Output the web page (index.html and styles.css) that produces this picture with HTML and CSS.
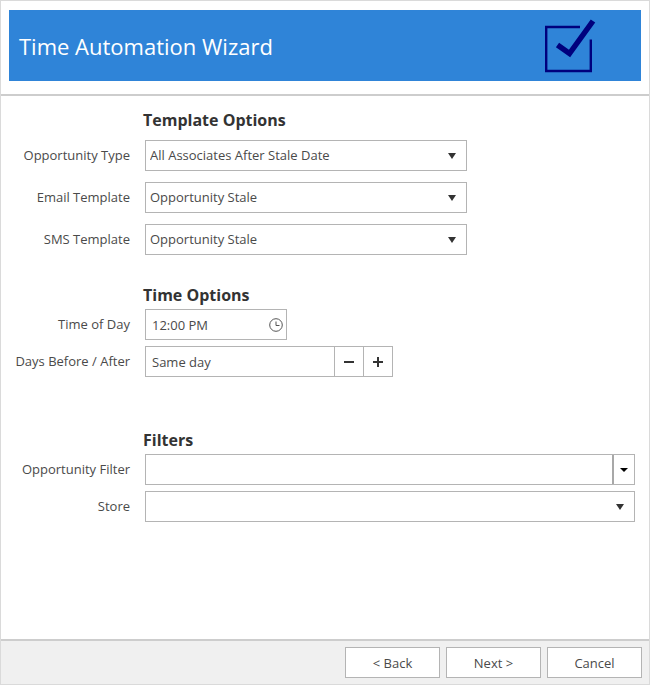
FILE: index.html
```html
<!DOCTYPE html>
<html lang="en">
<head>
<meta charset="utf-8">
<title>Time Automation Wizard</title>
<link rel="stylesheet" href="styles.css">
</head>
<body>
<form class="wizard">
  <header class="wizard-header">
    <div class="banner">
      <h1>Time Automation Wizard</h1>
      <svg class="banner-icon" width="54" height="54" viewBox="0 0 54 54" aria-hidden="true">
        <path d="M36 8H2.200V52H46.800V20.500" fill="none" stroke="#00007d" stroke-width="2.400"/>
        <path d="M13.500 26L25.500 34.500L49 2" fill="none" stroke="#00007d" stroke-width="5.500"/>
      </svg>
    </div>
  </header>

  <main class="wizard-body">
    <section class="group group-template">
      <h2>Template Options</h2>
      <div class="row">
        <label for="type">Opportunity Type</label>
        <div class="select medium">
          <select id="type"><option>All Associates After Stale Date</option></select>
          <svg class="arrow" width="8" height="6" viewBox="0 0 8 6" aria-hidden="true"><path d="M0 0H8L4 6Z"/></svg>
        </div>
      </div>
      <div class="row">
        <label for="email">Email Template</label>
        <div class="select medium">
          <select id="email"><option>Opportunity Stale</option></select>
          <svg class="arrow" width="8" height="6" viewBox="0 0 8 6" aria-hidden="true"><path d="M0 0H8L4 6Z"/></svg>
        </div>
      </div>
      <div class="row">
        <label for="sms">SMS Template</label>
        <div class="select medium">
          <select id="sms"><option>Opportunity Stale</option></select>
          <svg class="arrow" width="8" height="6" viewBox="0 0 8 6" aria-hidden="true"><path d="M0 0H8L4 6Z"/></svg>
        </div>
      </div>
    </section>

    <section class="group group-time">
      <h2>Time Options</h2>
      <div class="row">
        <label for="time">Time of Day</label>
        <div class="field time">
          <input id="time" type="text" value="12:00 PM">
          <button class="clock" type="button" aria-label="Choose time">
            <svg width="14" height="14" viewBox="0 0 14 14" aria-hidden="true">
              <circle cx="7" cy="7" r="6.300"/>
              <path d="M7 3.500V7.500H10.500"/>
            </svg>
          </button>
        </div>
      </div>
      <div class="row">
        <label for="days">Days Before / After</label>
        <div class="field days">
          <input id="days" type="text" value="Same day">
          <button class="step" type="button" aria-label="Decrease">
            <svg width="10" height="10" viewBox="0 0 10 10" aria-hidden="true"><path d="M0 5H10"/></svg>
          </button>
          <button class="step" type="button" aria-label="Increase">
            <svg width="10" height="10" viewBox="0 0 10 10" aria-hidden="true"><path d="M0 5H10M5 0V10"/></svg>
          </button>
        </div>
      </div>
    </section>

    <section class="group group-filters">
      <h2>Filters</h2>
      <div class="row">
        <label for="filter">Opportunity Filter</label>
        <div class="field">
          <input id="filter" type="text">
          <button class="drop" type="button" aria-label="Show filters">
            <svg width="8" height="4" viewBox="0 0 8 4" aria-hidden="true"><path d="M0 0H8L4 4Z"/></svg>
          </button>
        </div>
      </div>
      <div class="row">
        <label for="store">Store</label>
        <div class="select">
          <select id="store"><option></option></select>
          <svg class="arrow" width="8" height="6" viewBox="0 0 8 6" aria-hidden="true"><path d="M0 0H8L4 6Z"/></svg>
        </div>
      </div>
    </section>
  </main>

  <footer class="wizard-footer">
    <button class="btn" type="button">&lt; Back</button>
    <button class="btn" type="button">Next &gt;</button>
    <button class="btn" type="button">Cancel</button>
  </footer>
</form>
</body>
</html>
```
FILE: styles.css
```css
* {
  box-sizing: border-box;
}

body {
  margin: 0;
  background: #fff;
  color: #4a4a4a;
  font: 13px/18px "Open Sans", "Noto Sans", sans-serif;
}

h1,
h2 {
  margin: 0;
}

input,
select,
button {
  margin: 0;
  padding: 0;
  border: 0;
  border-radius: 0;
  background: transparent;
  color: inherit;
  font: inherit;
}

.wizard {
  display: flex;
  flex-direction: column;
  min-height: 100vh;
  border: 1px solid #dadada;
}

.wizard-header {
  padding: 9px 8px 13px;
  border-bottom: 2px solid #cdcdcd;
}

.banner {
  display: flex;
  align-items: center;
  justify-content: space-between;
  height: 71px;
  padding: 0 43px 0 10px;
  background: #2f84d8;
}

.banner h1 {
  color: #fff;
  font-size: 22px;
  font-weight: 400;
  line-height: 30px;
}

.wizard-body {
  flex: 1;
  padding: 12px 14px 0 0;
}

.group h2 {
  margin-left: 142px;
  color: #333;
  font-size: 16px;
  font-weight: 700;
  line-height: 24px;
}

.row {
  display: grid;
  grid-template-columns: 129px 1fr;
  column-gap: 15px;
  align-items: center;
}

.row label {
  padding-bottom: 2px;
  text-align: right;
}

.row + .row {
  margin-top: 6px;
}

.group-template h2 {
  margin-bottom: 8px;
}

.group-template .row + .row {
  margin-top: 11px;
}

.group-time {
  margin-top: 28px;
}

.group-time h2,
.group-filters h2 {
  margin-bottom: 2px;
}

.group-filters {
  margin-top: 51px;
}

.field,
.select {
  height: 31px;
  border: 1px solid #b4b4b4;
  background: #fff;
}

.select {
  display: grid;
  align-items: center;
}

.select > * {
  grid-area: 1 / 1;
}

.select select {
  width: 100%;
  height: 29px;
  padding: 0 30px 2px 4px;
  appearance: none;
}

.medium {
  width: 322px;
}

.arrow {
  justify-self: end;
  margin-right: 10px;
  fill: #333;
  pointer-events: none;
}

.field {
  display: flex;
}

.field input {
  flex: 1;
  min-width: 0;
  padding-left: 6px;
}

.field button {
  display: grid;
  place-items: center;
}

.time {
  width: 142px;
}

.clock {
  width: 21px;
}

.clock svg {
  fill: none;
  stroke: #555;
}

.days {
  width: 248px;
}

.field .step {
  width: 29px;
  border-left: 1px solid #b4b4b4;
}

.step svg {
  stroke: #333;
  stroke-width: 2;
}

.field .drop {
  width: 22px;
  border-left: 2px solid #a8a8a8;
}

.wizard-footer {
  display: flex;
  justify-content: flex-end;
  gap: 6px;
  padding: 6px 7px 6px 6px;
  border-top: 2px solid #cdcdcd;
  background: #f0f0f0;
}

.btn {
  width: 95px;
  height: 31px;
  border: 1px solid #b4b4b4;
  background: #fff;
}
```
